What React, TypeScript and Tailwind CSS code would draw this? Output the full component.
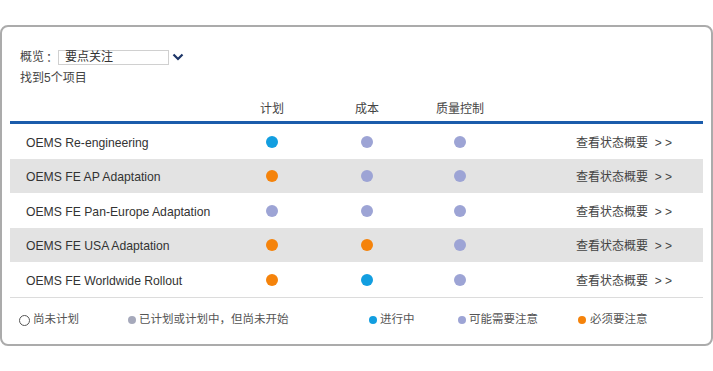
import React from "react";

type C = "blue" | "lav" | "orange";
const dotCls: Record<C, string> = {
  blue: "bg-[#129ee0]",
  lav: "bg-[#9da4d5]",
  orange: "bg-[#f5830b]",
};

const rows: { name: string; s: [C, C, C] }[] = [
  { name: "OEMS Re-engineering", s: ["blue", "lav", "lav"] },
  { name: "OEMS FE AP Adaptation", s: ["orange", "lav", "lav"] },
  { name: "OEMS FE Pan-Europe Adaptation", s: ["lav", "lav", "lav"] },
  { name: "OEMS FE USA Adaptation", s: ["orange", "orange", "lav"] },
  { name: "OEMS FE Worldwide Rollout", s: ["orange", "blue", "lav"] },
];

const font = { fontFamily: "'Liberation Sans', 'Noto Sans CJK SC', sans-serif" };

function Dot({ c }: { c: C }) {
  return <span className={`block w-[12px] h-[12px] rounded-full ${dotCls[c]}`} />;
}

export default function App() {
  return (
    <div className="w-[713px] h-[371px] bg-white pt-[25px]" style={font}>
      <div className="h-[321px] rounded-[8px] border-2 border-[#ababab] pt-[22px]">
        <div className="flex items-center h-4 pl-[18px] text-[12px] text-[#444]">
          <span>概览</span>
          <span className="ml-[2px] font-['Noto_Sans_CJK_SC']">：</span>
          <div className="w-[111px] h-[15px] border border-[#d0d0d0] flex items-center pl-[6px] text-[12px] text-[#333] leading-none">
            要点关注
          </div>
          <div className="ml-[2px] w-[14px] h-[15px] flex items-center justify-center">
            <svg width="12" height="8" viewBox="0 0 12 8">
              <path d="M1.5 1.5 L6 6 L10.5 1.5" fill="none" stroke="#1d3567" strokeWidth="2.2" />
            </svg>
          </div>
        </div>
        <div className="mt-[5px] h-4 flex items-center pl-[18px] text-[12px] text-[#444]">找到5个项目</div>
        <div className="mx-[8px]">
          <div className="mt-[15px] h-4 flex items-center text-[12px] text-[#444]">
            <div className="w-[212px]" />
            <div className="w-[100px] text-center">计划</div>
            <div className="w-[90px] text-center">成本</div>
            <div className="w-[96px] text-center">质量控制</div>
          </div>
          <div className="mt-[4px] h-[3px] bg-[#1b5cab]" />
          {rows.map((r, i) => (
            <div
              key={r.name}
              className={`flex items-center ${i % 2 === 0 ? "h-[35px] bg-white" : "h-[34px] bg-[#e3e3e3]"}`}
            >
              <div className="w-[212px] pl-[16px] pt-[3px] text-[12.2px] text-[#333]">{r.name}</div>
              <div className="w-[100px] flex justify-center"><Dot c={r.s[0]} /></div>
              <div className="w-[90px] flex justify-center"><Dot c={r.s[1]} /></div>
              <div className="w-[96px] flex justify-center"><Dot c={r.s[2]} /></div>
              <div className="w-[68px]" />
              <div className="pt-[2px] text-[12px] text-[#444] whitespace-pre">查看状态概要  &gt; &gt;</div>
            </div>
          ))}
          <div className="h-px bg-[#dcdcdc]" />
        </div>
        <div className="mt-[14px] h-4 flex items-center pl-[17px] text-[11.5px] text-[#555]">
          <div className="w-[109px] flex items-center">
            <span className="w-[11px] h-[11px] rounded-full border-[1.5px] border-[#555] mr-[3px]" />
            <span>尚未计划</span>
          </div>
          <div className="w-[241px] flex items-center">
            <span className="w-[8px] h-[8px] rounded-full bg-[#a6a9bb] mr-[3px]" />
            <span>已计划或计划中，但尚未开始</span>
          </div>
          <div className="w-[89px] flex items-center">
            <span className="w-[8px] h-[8px] rounded-full bg-[#129ee0] mr-[3px]" />
            <span>进行中</span>
          </div>
          <div className="w-[120px] flex items-center">
            <span className="w-[8px] h-[8px] rounded-full bg-[#9da4d5] mr-[3px]" />
            <span>可能需要注意</span>
          </div>
          <div className="flex items-center">
            <span className="w-[8px] h-[8px] rounded-full bg-[#f5830b] mr-[4px]" />
            <span>必须要注意</span>
          </div>
        </div>
      </div>
    </div>
  );
}
